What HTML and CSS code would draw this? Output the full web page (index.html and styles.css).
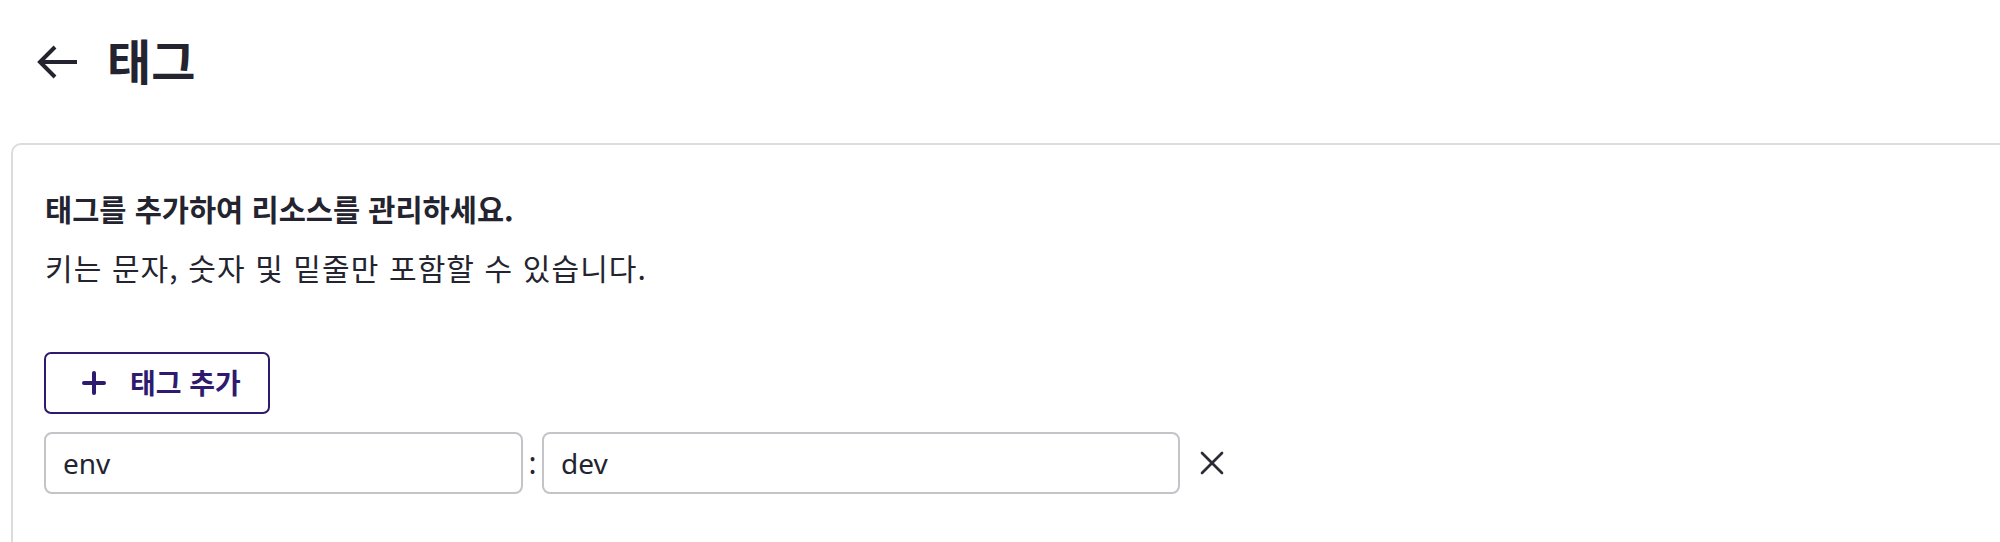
FILE: index.html
```html
<!DOCTYPE html>
<html lang="ko">
<head>
<meta charset="utf-8">
<title>태그</title>
<link rel="stylesheet" href="styles.css">
</head>
<body>
<header class="header">
  <button class="back" aria-label="뒤로">
    <svg width="40" height="34" viewBox="0 0 40 34" fill="none" stroke="#23242f" stroke-width="4" stroke-linecap="butt" stroke-linejoin="miter">
      <path d="M40 17H4"/>
      <path d="M18 2L3 17L18 32"/>
    </svg>
  </button>
  <h1 class="title">태그</h1>
</header>
<section class="card">
  <div class="desc">
    <p class="desc-strong">태그를 추가하여 리소스를 관리하세요.</p>
    <p class="desc-text">키는 문자, 숫자 및 밑줄만 포함할 수 있습니다.</p>
  </div>
  <button class="add-btn">
    <svg class="plus" width="24" height="24" viewBox="0 0 24 24" fill="none" stroke="#2e1a6e" stroke-width="4" stroke-linecap="round">
      <path d="M12 2V22"/>
      <path d="M2 12H22"/>
    </svg>
    <span>태그 추가</span>
  </button>
  <div class="tag-row">
    <input class="field field-key" type="text" value="env">
    <span class="colon">:</span>
    <input class="field field-value" type="text" value="dev">
    <button class="remove" aria-label="삭제">
      <svg width="26" height="26" viewBox="0 0 26 26" fill="none" stroke="#2b2c36" stroke-width="2.6" stroke-linecap="round">
        <path d="M3 3L23 23"/>
        <path d="M23 3L3 23"/>
      </svg>
    </button>
  </div>
</section>
</body>
</html>
```

FILE: styles.css
```css
html, body {
  margin: 0;
  padding: 0;
  background: #ffffff;
  overflow: hidden;
}

body {
  font-family: "Noto Sans", "Noto Sans CJK KR", sans-serif;
  color: #23242f;
  width: 2000px;
  height: 542px;
}

.header {
  height: 124px;
  display: flex;
  align-items: center;
  padding-left: 37px;
  box-sizing: border-box;
}

.back {
  border: 0;
  background: none;
  padding: 0;
  margin: 0 30px 0 0;
  display: flex;
  align-items: center;
  cursor: pointer;
}

.title {
  margin: 0;
  font-family: "Noto Sans CJK KR", sans-serif;
  font-weight: 700;
  font-size: 48px;
  line-height: 1;
  color: #23242f;
  position: relative;
  top: -3px;
}

.card {
  margin: 19px 0 0 11px;
  width: 2100px;
  height: 600px;
  border: 2px solid #dcdcdc;
  border-radius: 10px;
  box-sizing: border-box;
  padding: 42px 0 0 31px;
}

.desc {
  display: flex;
  flex-direction: column;
  gap: 17px;
  margin-left: 1px;
}

.desc p {
  margin: 0;
  font-family: "Noto Sans CJK KR", sans-serif;
  line-height: 42px;
  color: #23242f;
}

.desc-strong {
  font-weight: 700;
  font-size: 29.5px;
}

.desc-text {
  font-weight: 400;
  font-size: 30px;
  letter-spacing: 1.1px;
}

.add-btn {
  margin-top: 64px;
  height: 62px;
  width: 226px;
  display: flex;
  align-items: center;
  gap: 24px;
  padding: 0 0 0 36px;
  box-sizing: border-box;
  border: 2px solid #2e1a6e;
  border-radius: 7px;
  background: #ffffff;
  color: #2e1a6e;
  font-family: "Noto Sans CJK KR", sans-serif;
  font-weight: 700;
  font-size: 28px;
  cursor: pointer;
}

.add-btn span {
  line-height: 1;
  position: relative;
  top: -1px;
}

.tag-row {
  margin-top: 18px;
  display: flex;
  align-items: center;
}

.field {
  height: 62px;
  box-sizing: border-box;
  border: 2px solid #c4c4c8;
  border-radius: 8px;
  padding: 0 17px;
  font-family: "Noto Sans", "Noto Sans CJK KR", sans-serif;
  font-size: 28px;
  color: #23242f;
  background: #ffffff;
  outline: none;
}

.field-key {
  width: 479px;
}

.field-value {
  width: 638px;
}

.colon {
  width: 19px;
  text-align: center;
  font-size: 30px;
  line-height: 1;
  color: #23242f;
}

.remove {
  border: 0;
  background: none;
  padding: 0;
  margin-left: 19px;
  display: flex;
  align-items: center;
  cursor: pointer;
}
```
